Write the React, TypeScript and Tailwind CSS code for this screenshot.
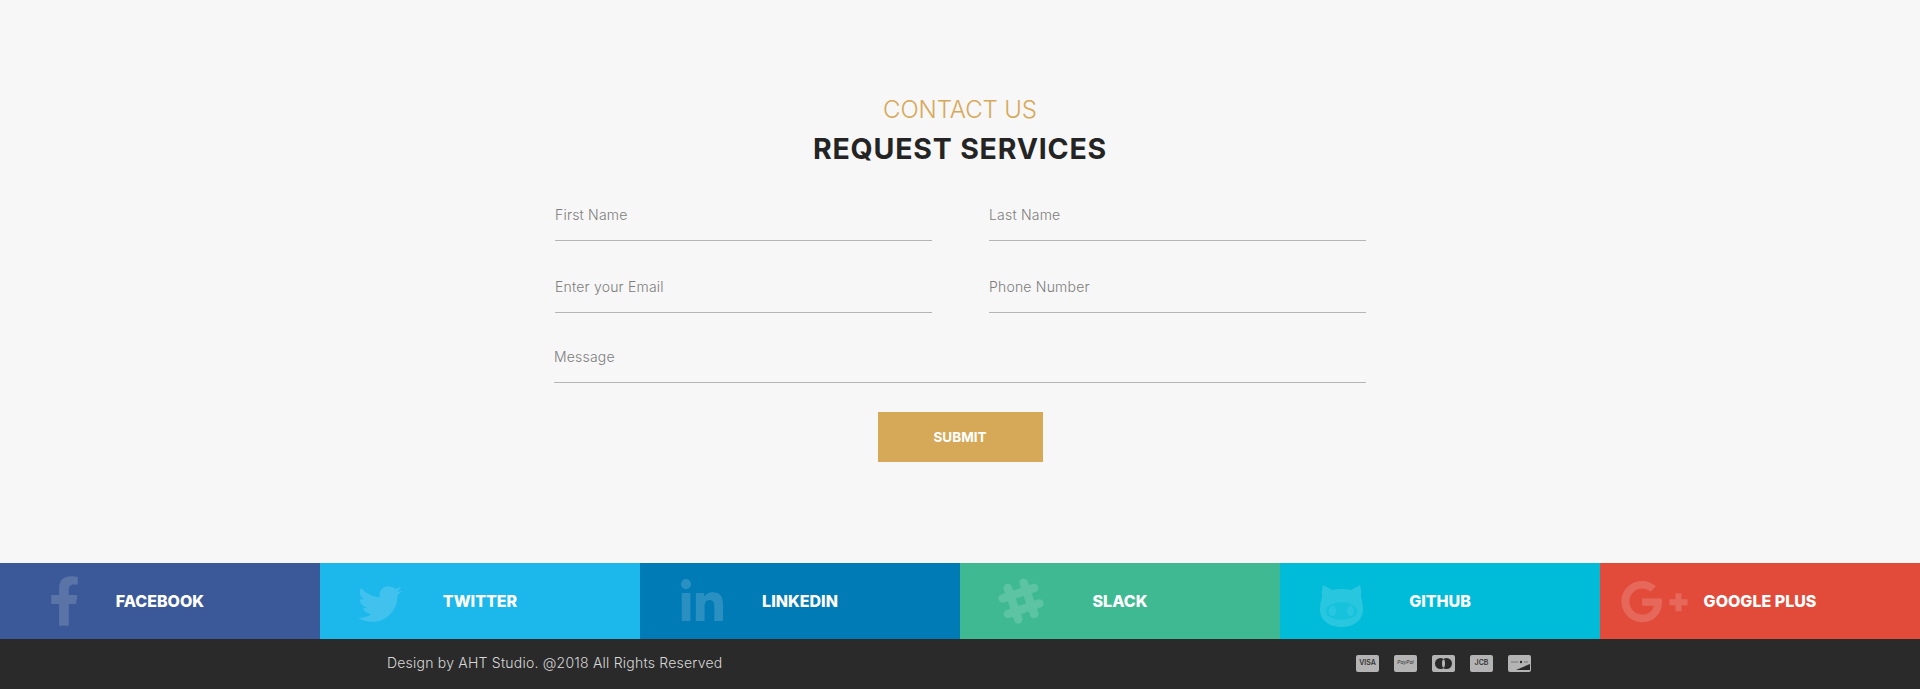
import { FaFacebookF, FaGooglePlusG, FaLinkedinIn, FaSlackHash, FaTwitter } from "react-icons/fa";

const SANS = "font-['Inter','Liberation_Sans',sans-serif]";

function GithubFace({ className }: { className?: string }) {
  return (
    <svg viewBox="0 0 43 42" className={className} fill="currentColor">
      <path d="M3 0l9 5q9.500-2 19 0l9-5q2 6 1 12 2 6 2 12c0 12-10 18-21.500 18S0 36 0 24q0-6 2-12-1-6 1-12z" />
      <ellipse cx="21.500" cy="26" rx="16" ry="9" fill="#00bcd9" fillOpacity="0.45" />
      <ellipse cx="12.500" cy="26" rx="3.500" ry="5" />
      <ellipse cx="30.500" cy="26" rx="3.500" ry="5" />
    </svg>
  );
}

const SOCIAL = [
  { label: "FACEBOOK", bg: "bg-[#3b5998]", icon: <FaFacebookF className="absolute left-[49px] top-[13px] h-[50px] w-[31px]" /> },
  { label: "TWITTER", bg: "bg-[#1cb7eb]", icon: <FaTwitter className="absolute left-[38px] top-[19px] h-[44px] w-[44px]" /> },
  { label: "LINKEDIN", bg: "bg-[#007bb6]", icon: <FaLinkedinIn className="absolute left-[38px] top-[16px] h-[48px] w-[48px]" /> },
  { label: "SLACK", bg: "bg-[#3eb991]", icon: <FaSlackHash strokeWidth={14} className="absolute left-[36px] top-[13px] h-[50px] w-[50px]" /> },
  { label: "GITHUB", bg: "bg-[#00bcd9]", icon: <GithubFace className="absolute left-[39px] top-[22px] h-[42px] w-[45px]" /> },
  { label: "GOOGLE PLUS", bg: "bg-[#e24b3a]", icon: <FaGooglePlusG className="absolute left-[20px] top-[11px] h-[55px] w-[69px]" /> },
];

function Field({ placeholder }: { placeholder: string }) {
  return (
    <input
      placeholder={placeholder}
      className="box-border h-[41px] w-full border-b border-[#b5b5b5] bg-transparent pb-[12px] text-[14px] font-light tracking-[0.2px] outline-none placeholder:text-[#7d7d7d]"
    />
  );
}

function Card({ children }: { children: React.ReactNode }) {
  return (
    <div className="flex h-[17px] w-[23px] items-center justify-center overflow-hidden rounded-[2px] bg-[#b4b4b4] text-[#333]">
      {children}
    </div>
  );
}

export default function App() {
  return (
    <div className={`min-h-[689px] bg-[#f7f7f7] ${SANS}`}>
      <section className="flex h-[563px] flex-col items-center pt-[94px]">
        <h3 className="text-[24px] font-light leading-[32px] tracking-[-0.1px] text-[#d6a959]">CONTACT US</h3>
        <h2 className="mt-[3px] text-[28.5px] font-bold leading-[40px] tracking-[0.8px] text-[#242424]">REQUEST SERVICES</h2>

        <form className="mt-[31px] flex w-[812px] flex-col">
          <div className="grid grid-cols-2 gap-x-[57px] gap-y-[31px] pl-[1px]">
            <Field placeholder="First Name" />
            <Field placeholder="Last Name" />
            <Field placeholder="Enter your Email" />
            <Field placeholder="Phone Number" />
          </div>
          <div className="mt-[29px]">
            <Field placeholder="Message" />
          </div>
          <button
            type="button"
            className="mx-auto mt-[29px] h-[50px] w-[165px] bg-[#d6a959] text-[13.5px] font-bold text-white"
          >
            SUBMIT
          </button>
        </form>
      </section>

      <div className="grid h-[76px] grid-cols-6">
        {SOCIAL.map((s) => (
          <div
            key={s.label}
            className={`relative flex items-center justify-center overflow-hidden text-[16px] font-extrabold text-white ${s.bg}`}
          >
            <span className="opacity-[0.16]">{s.icon}</span>
            <span>{s.label}</span>
          </div>
        ))}
      </div>

      <footer className="flex h-[50px] items-center bg-[#2a2a2a] pb-[2px] pl-[387px]">
        <p className="mb-[2px] w-[969px] text-[14px] font-light tracking-[0.22px] text-[#d8d8d8]">
          Design by AHT Studio. @2018 All Rights Reserved
        </p>
        <div className="flex gap-[15px]">
          <Card>
            <span className="text-[7px] font-semibold">VISA</span>
          </Card>
          <Card>
            <span className="text-[5px] italic">PayPal</span>
          </Card>
          <Card>
            <svg viewBox="0 0 23 17" className="h-[17px] w-[23px]" fill="#2a2a2a">
              <circle cx="8.500" cy="8.500" r="5.500" />
              <circle cx="14.500" cy="8.500" r="5.500" />
              <ellipse cx="11.500" cy="8.500" rx="1.500" ry="4" fill="#b4b4b4" />
            </svg>
          </Card>
          <Card>
            <span className="text-[7px] font-semibold">JCB</span>
          </Card>
          <Card>
            <svg viewBox="0 0 23 17" className="h-[17px] w-[23px]">
              <circle cx="13" cy="7" r="1.200" fill="#2a2a2a" />
              <path d="M3 7h7M16 7h4" stroke="#777" strokeWidth="1" />
              <path d="M8 15L22 9v6z" fill="#2a2a2a" />
            </svg>
          </Card>
        </div>
      </footer>
    </div>
  );
}
